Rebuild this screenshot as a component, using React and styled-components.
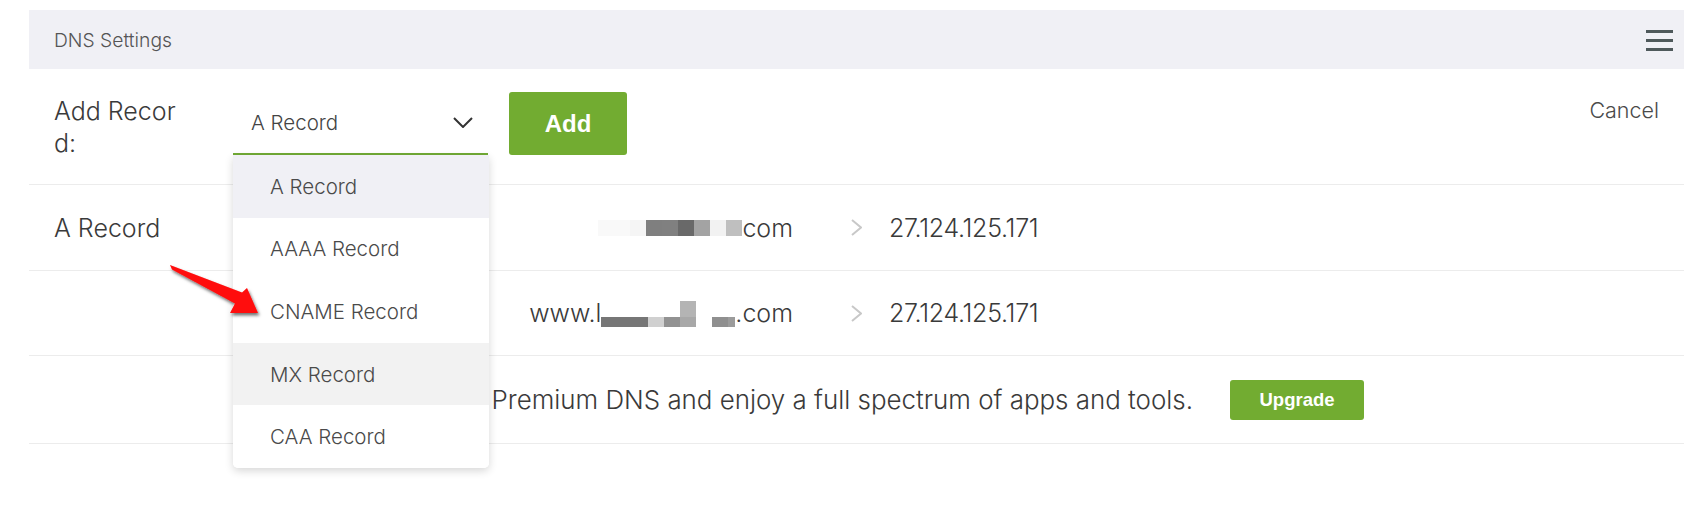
import React from 'react'
import styled, { createGlobalStyle } from 'styled-components'

const GlobalStyle = createGlobalStyle`
  body {
    margin: 0;
    background: #fff;
    font-family: Inter, "Noto Sans", sans-serif;
    color: #3a3a3a;
  }
`

const recordTypes = ['A Record', 'AAAA Record', 'CNAME Record', 'MX Record', 'CAA Record']

const blurOne = [
  { w: 16, h: 16, c: '#f9f9f9' },
  { w: 16, h: 16, c: '#f9f9f9' },
  { w: 16, h: 16, c: '#f5f5f5' },
  { w: 16, h: 16, c: '#7f7f7f' },
  { w: 16, h: 16, c: '#808080' },
  { w: 16, h: 16, c: '#696969' },
  { w: 16, h: 16, c: '#a3a3a3' },
  { w: 16, h: 16, c: '#f2f2f2' },
  { w: 16, h: 16, c: '#bfbfbf' },
]

const blurTwo = [
  { w: 47, h: 10, c: '#767676' },
  { w: 16, h: 10, c: '#d0d0d0' },
  { w: 16, h: 10, c: '#929292' },
  { w: 16, h: 26, c: '#a8a8a8', top: '#b4b4b4' },
  { w: 16, h: 10, c: 'transparent' },
  { w: 16, h: 10, c: '#8f8f8f' },
  { w: 7, h: 10, c: '#9b9b9b' },
]

const Page = styled.div`
  position: relative;
  padding: 10px 0 0 29px;
  height: 506px;
  overflow: hidden;
`

const Panel = styled.div`
  display: flex;
  flex-direction: column;
`

const Header = styled.div`
  height: 59px;
  background: #f0f0f5;
  display: flex;
  align-items: center;
  justify-content: space-between;
  padding: 0 11px 0 25px;
  font-size: 19.3px;
  font-weight: 300;
  color: #555;
`

const Burger = styled.div`
  display: flex;
  flex-direction: column;
  gap: 6px;
  margin-top: 1px;
  span {
    display: block;
    width: 27px;
    height: 3px;
    background: #4f595b;
  }
`

const AddRow = styled.div`
  position: relative;
  height: 115px;
  border-bottom: 1px solid #ececec;
  display: flex;
  align-items: flex-start;
  padding: 0 25px;
`

const Label = styled.div`
  width: 179px;
  margin-top: 26px;
  font-size: 25px;
  font-weight: 300;
  line-height: 32px;
`

const Select = styled.div`
  width: 237px;
  height: 61px;
  margin-top: 23px;
  padding-left: 18px;
  display: flex;
  align-items: center;
  justify-content: space-between;
  border-bottom: 2px solid #71aa35;
  font-size: 20.5px;
  font-weight: 300;
  color: #444;
  svg {
    margin-right: 15px;
  }
`

const GreenButton = styled.button`
  border: none;
  border-radius: 3px;
  background: #72ac31;
  color: #fff;
  font-family: "Liberation Sans", Arial, sans-serif;
  font-weight: 700;
  font-size: ${(p) => p.$size}px;
  width: ${(p) => p.$w}px;
  height: ${(p) => p.$h}px;
  padding: 0;
  cursor: pointer;
`

const AddButton = styled(GreenButton)`
  margin: 23px 0 0 21px;
`

const Cancel = styled.div`
  margin: 26px 0 0 auto;
  font-size: 21.5px;
  font-weight: 300;
  line-height: 30px;
  color: #4a4a4a;
`

const Menu = styled.ul`
  position: absolute;
  top: 86px;
  left: 204px;
  width: 256px;
  margin: 0;
  padding: 0;
  list-style: none;
  background: #fff;
  border-radius: 0 0 5px 5px;
  box-shadow: 0 3px 9px rgba(0, 0, 0, 0.16);
  z-index: 2;
  overflow: hidden;
`

const MenuItem = styled.li`
  height: 62.6px;
  display: flex;
  align-items: center;
  padding-left: 37px;
  font-size: 20.5px;
  font-weight: 300;
  color: #4a4a4a;
  background: ${(p) => (p.$selected ? '#f0f0f5' : p.$hover ? '#f2f2f2' : '#fff')};
`

const RecordRow = styled.div`
  height: ${(p) => p.$h}px;
  border-bottom: 1px solid #ececec;
  display: grid;
  grid-template-columns: 204px 535px 96px 1fr;
  align-items: center;
  padding-left: 25px;
  font-size: 25px;
  font-weight: 300;
  white-space: nowrap;
`

const Host = styled.div`
  text-align: right;
`

const Arrow = styled.div`
  padding-left: 58px;
  display: flex;
  align-items: center;
`

const Address = styled.div`
  letter-spacing: -0.3px;
`

const Blur = styled.span`
  display: inline-flex;
  align-items: flex-end;
  vertical-align: ${(p) => p.$shift}px;
`

const Pixel = styled.span`
  display: flex;
  flex-direction: column;
  width: ${(p) => p.$w}px;
  height: ${(p) => p.$h}px;
  background: ${(p) => p.$c};
  &::before {
    content: '';
    display: ${(p) => (p.$top ? 'block' : 'none')};
    height: 16px;
    background: ${(p) => p.$top};
  }
`

const PromoRow = styled.div`
  height: 87px;
  border-bottom: 1px solid #ececec;
  display: flex;
  align-items: center;
  padding-left: 25px;
  font-size: 25.9px;
  font-weight: 300;
`

const Promo = styled.div`
  width: 1139px;
  text-align: right;
  white-space: nowrap;
  overflow: hidden;
  margin-right: 37px;
`

const Pointer = styled.svg`
  position: absolute;
  left: 160px;
  top: 255px;
  z-index: 3;
`

const Chevron = ({ w, h, color, sw, dir }) => (
  <svg width={w} height={h} viewBox={`0 0 ${w} ${h}`}>
    {dir === 'down' ? (
      <polyline points={`1,1 ${w / 2},${h - 1} ${w - 1},1`} fill="none" stroke={color} strokeWidth={sw} />
    ) : (
      <polyline points={`1,1 ${w - 1},${h / 2} 1,${h - 1}`} fill="none" stroke={color} strokeWidth={sw} />
    )}
  </svg>
)

const Blurred = ({ blocks, shift }) => (
  <Blur $shift={shift}>
    {blocks.map((b, i) => (
      <Pixel key={i} $w={b.w} $h={b.h} $c={b.c} $top={b.top} />
    ))}
  </Blur>
)

export default function App() {
  return (
    <>
      <GlobalStyle />
      <Page>
        <Panel>
          <Header>
            DNS Settings
            <Burger>
              <span />
              <span />
              <span />
            </Burger>
          </Header>
          <AddRow>
            <Label>
              Add Recor
              <br />
              d:
            </Label>
            <Select>
              A Record
              <Chevron w={20} h={11} color="#333" sw={2} dir="down" />
            </Select>
            <AddButton $w={118} $h={63} $size={24}>Add</AddButton>
            <Cancel>Cancel</Cancel>
            <Menu>
              {recordTypes.map((t, i) => (
                <MenuItem key={t} $selected={i === 0} $hover={i === 3}>
                  {t}
                </MenuItem>
              ))}
            </Menu>
          </AddRow>
          <RecordRow $h={85}>
            <div>A Record</div>
            <Host>
              <Blurred blocks={blurOne} shift={1} />
              com
            </Host>
            <Arrow>
              <Chevron w={11} h={17} color="#c8c8c8" sw={2} />
            </Arrow>
            <Address>27.124.125.171</Address>
          </RecordRow>
          <RecordRow $h={84}>
            <div />
            <Host>
              www.l
              <Blurred blocks={blurTwo} shift={-5} />
              .com
            </Host>
            <Arrow>
              <Chevron w={11} h={17} color="#c8c8c8" sw={2} />
            </Arrow>
            <Address>27.124.125.171</Address>
          </RecordRow>
          <PromoRow>
            <Promo>Upgrade to Premium DNS and enjoy a full spectrum of apps and tools.</Promo>
            <GreenButton $w={134} $h={40} $size={18.5}>Upgrade</GreenButton>
          </PromoRow>
        </Panel>
        <Pointer width="110" height="65" viewBox="0 0 110 65">
          <defs>
            <filter id="arrowShadow" x="-20%" y="-20%" width="150%" height="160%">
              <feDropShadow dx="1.5" dy="2.5" stdDeviation="1.5" floodColor="#000" floodOpacity="0.55" />
            </filter>
          </defs>
          <polygon
            points="10,10 82,37.5 87,33 98,58 70,58 75,48.5 12,14.5"
            fill="#ff0a0a"
            filter="url(#arrowShadow)"
          />
        </Pointer>
      </Page>
    </>
  )
}
